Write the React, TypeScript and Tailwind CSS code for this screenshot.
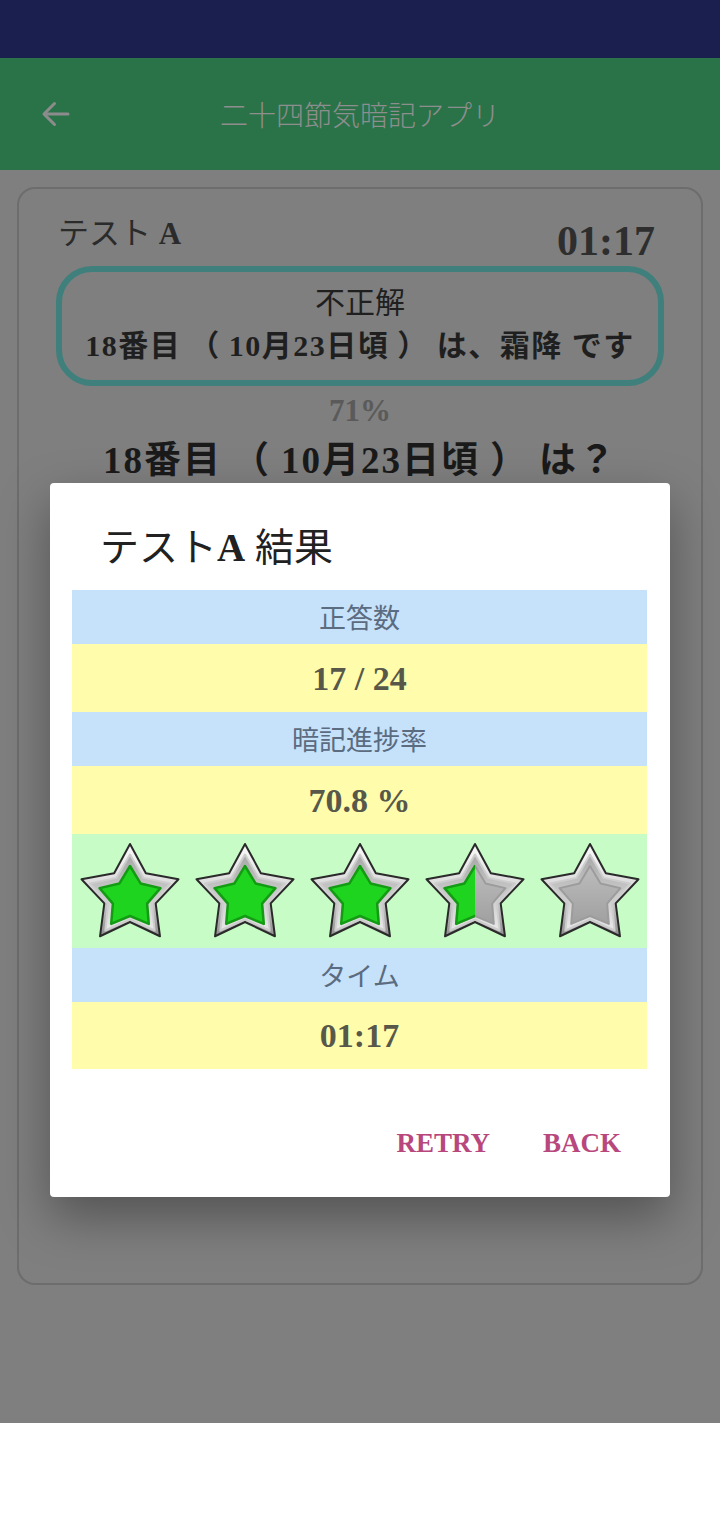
import React from "react";

const SERIF = { fontFamily: '"Liberation Serif", "Noto Sans CJK JP", serif' };
const JP = { fontFamily: '"Noto Sans CJK JP", sans-serif' };

function starPoints(cx: number, cy: number, R: number, r: number) {
  const pts: string[] = [];
  for (let i = 0; i < 10; i++) {
    const rad = i % 2 === 0 ? R : r;
    const a = (-90 + i * 36) * (Math.PI / 180);
    pts.push(`${(cx + rad * Math.cos(a)).toFixed(2)},${(cy + rad * Math.sin(a)).toFixed(2)}`);
  }
  return pts.join(" ");
}

function Star({ kind, id }: { kind: "full" | "half" | "empty"; id: string }) {
  const cx = 53;
  const cy = 55;
  const outer = starPoints(cx, cy, 51, 27);
  const bevel = starPoints(cx, cy + 1.5, 42, 23);
  const inner = starPoints(cx, cy + 3, 32, 18);
  return (
    <svg width="106" height="102" viewBox="0 0 106 102">
      <defs>
        <linearGradient id={`silver-${id}`} x1="0" y1="0" x2="0" y2="1">
          <stop offset="0" stopColor="#fbfbfb" />
          <stop offset="0.55" stopColor="#d4d4d4" />
          <stop offset="1" stopColor="#8f8f8f" />
        </linearGradient>
        <linearGradient id={`bevel-${id}`} x1="0" y1="0" x2="0" y2="1">
          <stop offset="0" stopColor="#a8a8a8" />
          <stop offset="1" stopColor="#e8e8e8" />
        </linearGradient>
        <linearGradient id={`gray-${id}`} x1="0" y1="0" x2="0" y2="1">
          <stop offset="0" stopColor="#bdbdbd" />
          <stop offset="1" stopColor="#a0a0a0" />
        </linearGradient>
        <clipPath id={`left-${id}`}>
          <rect x="0" y="0" width={cx} height="102" />
        </clipPath>
      </defs>
      <polygon points={outer} fill={`url(#silver-${id})`} stroke="#2a2a2a" strokeWidth="2" strokeLinejoin="round" />
      <polygon points={bevel} fill={`url(#bevel-${id})`} strokeLinejoin="round" stroke="#cdcdcd" strokeWidth="2" />
      {kind === "full" ? (
        <polygon points={inner} fill="#1fd41f" stroke="#139b13" strokeWidth="2.5" strokeLinejoin="round" />
      ) : (
        <polygon points={inner} fill={`url(#gray-${id})`} stroke="#9c9c9c" strokeWidth="2" strokeLinejoin="round" />
      )}
      {kind === "half" && (
        <g clipPath={`url(#left-${id})`}>
          <polygon points={inner} fill="#1fd41f" stroke="#139b13" strokeWidth="2.5" strokeLinejoin="round" />
        </g>
      )}
    </svg>
  );
}

function LabelRow({ text }: { text: string }) {
  return (
    <div className="h-[54px] bg-[#c6e2fb] flex items-center justify-center text-[27px] text-[#5b6b80]" style={JP}>
      {text}
    </div>
  );
}

function ValueRow({ text, h }: { text: string; h: string }) {
  return (
    <div
      className={`${h} bg-[#fffdab] flex items-center justify-center text-[34px] font-bold text-[#58584a]`}
      style={SERIF}
    >
      {text}
    </div>
  );
}

export default function App() {
  const stars: ("full" | "half" | "empty")[] = ["full", "full", "full", "half", "empty"];
  return (
    <div className="w-[720px] h-[1520px] bg-white">
      <div className="relative w-[720px] h-[1423px] bg-[#7f7f7f] overflow-hidden">
        {/* status bar */}
        <div className="h-[58px] bg-[#1a1f4f]" />
        {/* app bar */}
        <div className="h-[112px] bg-[#2a7349] flex items-center relative">
          <svg className="ml-[38px]" width="36" height="36" viewBox="0 0 24 24" fill="none" stroke="#8c8c8c" strokeWidth="2" strokeLinecap="round" strokeLinejoin="round">
            <path d="M20 12H5" />
            <path d="M11 5l-7 7 7 7" />
          </svg>
          <div className="absolute left-0 right-0 top-0 bottom-0 flex items-center justify-center pointer-events-none">
            <span className="text-[28px] font-light text-[#8e8e8e]" style={JP}>
              二十四節気暗記アプリ
            </span>
          </div>
        </div>
        {/* card */}
        <div className="mx-[17px] mt-[17px] h-[1098px] border-2 border-[#6d6d6d] rounded-[18px] px-[37px] pt-[22px]">
          <div className="flex items-end justify-between pl-[2px] pr-[9px]">
            <span className="text-[31px] text-[#2b2b2b]" style={SERIF}>
              テスト <span className="font-bold">A</span>
            </span>
            <span className="text-[42px] font-bold text-[#2e2e2e] leading-none mb-[-4px]" style={SERIF}>
              01:17
            </span>
          </div>
          <div className="mt-[8px] border-[6px] border-[#3f7f7c] rounded-[36px] h-[120px] flex flex-col items-center justify-center">
            <div className="text-[30px] text-[#1f1f1f] leading-[40px]" style={SERIF}>不正解</div>
            <div className="text-[30px] font-bold text-[#1f1f1f] leading-[46px] tracking-[1.5px]" style={SERIF}>
              18番目<span className="mx-[8px]">（</span>10月23日頃<span className="mx-[8px]">）</span>は、霜降 です
            </div>
          </div>
          <div className="mt-[6px] text-center text-[31px] font-bold text-[#5a5a5a] leading-[38px]" style={SERIF}>
            71%
          </div>
          <div className="mt-[6px] text-center text-[37px] font-bold text-[#1a1a1a] leading-[50px] tracking-[2px]" style={SERIF}>
            18番目<span className="mx-[10px]">（</span>10月23日頃<span className="mx-[10px]">）</span>は？
          </div>
        </div>

        {/* dialog */}
        <div className="absolute left-[50px] top-[483px] w-[620px] h-[714px] bg-white rounded-[4px] shadow-[0_20px_50px_rgba(0,0,0,0.35)]">
          <div className="pt-[42px] pl-[50px] h-[107px]">
            <span className="text-[39px] text-[#212121] leading-[46px]" style={SERIF}>
              テスト<span className="font-bold">A</span> 結果
            </span>
          </div>
          <div className="mx-[22px] w-[575px]">
            <LabelRow text="正答数" />
            <ValueRow text="17 / 24" h="h-[68px]" />
            <LabelRow text="暗記進捗率" />
            <ValueRow text="70.8 %" h="h-[68px]" />
            <div className="h-[114px] bg-[#c7fcc6] grid grid-cols-5 items-center justify-items-center">
              {stars.map((k, i) => (
                <Star key={i} kind={k} id={`s${i}`} />
              ))}
            </div>
            <LabelRow text="タイム" />
            <ValueRow text="01:17" h="h-[67px]" />
          </div>
          <div className="flex justify-end gap-[53px] pr-[49px] mt-[54px]">
            <span className="text-[27px] font-bold text-[#b8477d] leading-[40px]" style={SERIF}>RETRY</span>
            <span className="text-[27px] font-bold text-[#b8477d] leading-[40px]" style={SERIF}>BACK</span>
          </div>
        </div>
      </div>
    </div>
  );
}
